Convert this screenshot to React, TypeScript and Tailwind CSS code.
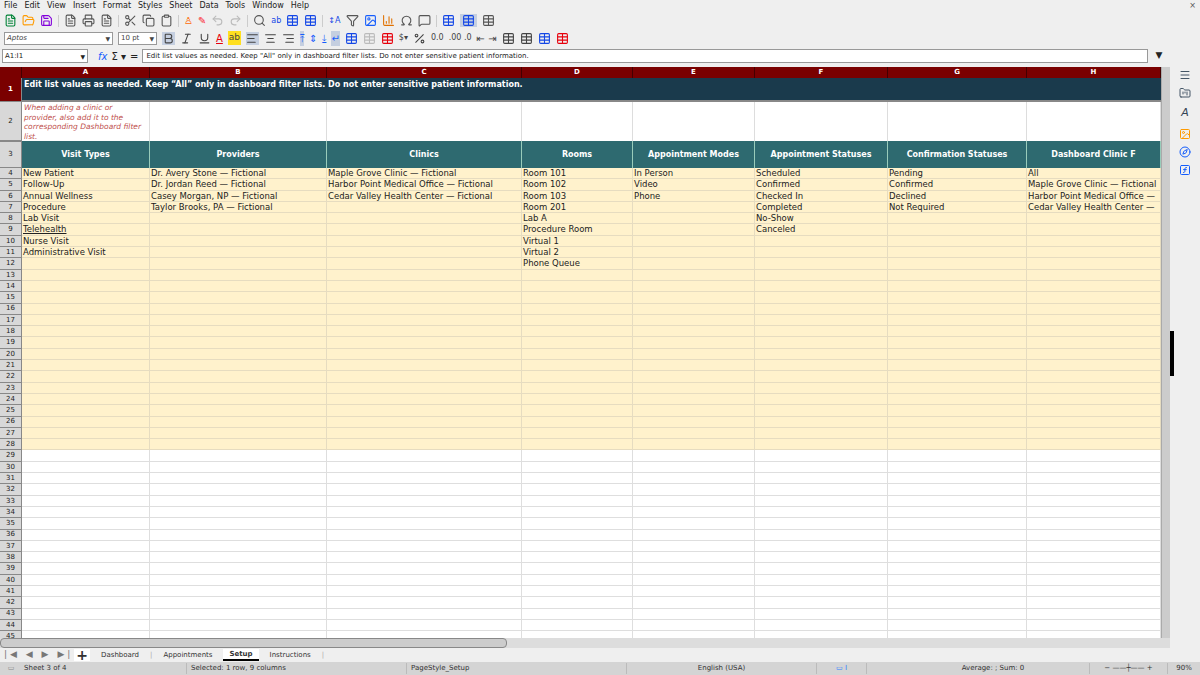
import { FileText, FolderOpen, Save, Printer, Scissors, Copy, Clipboard, Undo2, Redo2, Search, Table, Filter, Image, BarChart3, Omega, MessageSquare, AlignLeft, AlignCenter, AlignRight, Bold, Italic, Underline, Percent, Menu, Compass, FolderKanban, SquareFunction } from 'lucide-react'

const cols = [
  { l: 'A', w: 128, h: 'Visit Types' },
  { l: 'B', w: 177, h: 'Providers' },
  { l: 'C', w: 195, h: 'Clinics' },
  { l: 'D', w: 111, h: 'Rooms' },
  { l: 'E', w: 122, h: 'Appointment Modes' },
  { l: 'F', w: 133, h: 'Appointment Statuses' },
  { l: 'G', w: 139, h: 'Confirmation Statuses' },
  { l: 'H', w: 134, h: 'Dashboard Clinic F' },
]

const data: string[][] = [
  ['New Patient', 'Dr. Avery Stone — Fictional', 'Maple Grove Clinic — Fictional', 'Room 101', 'In Person', 'Scheduled', 'Pending', 'All'],
  ['Follow-Up', 'Dr. Jordan Reed — Fictional', 'Harbor Point Medical Office — Fictional', 'Room 102', 'Video', 'Confirmed', 'Confirmed', 'Maple Grove Clinic — Fictional'],
  ['Annual Wellness', 'Casey Morgan, NP — Fictional', 'Cedar Valley Health Center — Fictional', 'Room 103', 'Phone', 'Checked In', 'Declined', 'Harbor Point Medical Office —'],
  ['Procedure', 'Taylor Brooks, PA — Fictional', '', 'Room 201', '', 'Completed', 'Not Required', 'Cedar Valley Health Center —'],
  ['Lab Visit', '', '', 'Lab A', '', 'No-Show', '', ''],
  ['Telehealth', '', '', 'Procedure Room', '', 'Canceled', '', ''],
  ['Nurse Visit', '', '', 'Virtual 1', '', '', '', ''],
  ['Administrative Visit', '', '', 'Virtual 2', '', '', '', ''],
  ['', '', '', 'Phone Queue', '', '', '', ''],
]

const rows = Array.from({ length: 42 }, (_, i) => i + 4)

function RowHead({ n, className }: { n: number; className: string }) {
  return (
    <div className={`w-[22px] shrink-0 flex items-center justify-center text-[7px] border-b border-r border-[#888] ${className}`}>
      {n}
    </div>
  )
}

const ic = 'w-[13px] h-[13px]'

export default function App() {
  return (
    <div className="w-[1200px] h-[675px] overflow-hidden bg-[#efefef] flex flex-col text-[#222]" style={{ fontFamily: '"DejaVu Sans", sans-serif' }}>
      {/* menu */}
      <div className="h-[12px] flex items-center gap-[7px] px-[4px] text-[8px]">
        {['File', 'Edit', 'View', 'Insert', 'Format', 'Styles', 'Sheet', 'Data', 'Tools', 'Window', 'Help'].map((m) => (
          <span key={m}>{m}</span>
        ))}
        <span className="ml-auto text-[8px] text-[#555]">×</span>
      </div>
      {/* toolbar 1 */}
      <div className="h-[17px] flex items-center gap-[5px] px-[4px] text-[#555]">
        <FileText className={`${ic} text-green-700`} />
        <FolderOpen className={`${ic} text-amber-500`} />
        <Save className={`${ic} text-purple-700`} />
        <span className="w-px h-3 bg-[#ccc]" />
        <FileText className={ic} />
        <Printer className={ic} />
        <FileText className={ic} />
        <span className="w-px h-3 bg-[#ccc]" />
        <Scissors className={ic} />
        <Copy className={ic} />
        <Clipboard className={ic} />
        <span className="w-px h-3 bg-[#ccc]" />
        <span className="text-orange-500 text-[10px]">♙</span>
        <span className="text-red-500 text-[10px]">✎</span>
        <Undo2 className={`${ic} text-[#bbb]`} />
        <Redo2 className={`${ic} text-[#bbb]`} />
        <span className="w-px h-3 bg-[#ccc]" />
        <Search className={ic} />
        <span className="text-[8px] text-blue-700">ab</span>
        <Table className={`${ic} text-blue-700`} />
        <Table className={`${ic} text-blue-700`} />
        <span className="w-px h-3 bg-[#ccc]" />
        <span className="text-[8px] text-blue-700">↕A</span>
        <Filter className={ic} />
        <Image className={`${ic} text-blue-600`} />
        <BarChart3 className={`${ic} text-amber-600`} />
        <Omega className={ic} />
        <MessageSquare className={ic} />
        <span className="w-px h-3 bg-[#ccc]" />
        <Table className={`${ic} text-blue-700`} />
        <span className="bg-[#c5cfe0] px-[2px]"><Table className={`${ic} text-blue-700`} /></span>
        <Table className={ic} />
      </div>
      {/* toolbar 2 */}
      <div className="h-[18px] flex items-center gap-[5px] px-[4px] text-[#444]">
        <div className="w-[109px] h-[13px] bg-white border border-[#999] text-[7px] italic flex items-center px-[2px] justify-between">Aptos<span className="text-[6px]">▼</span></div>
        <div className="w-[39px] h-[13px] bg-white border border-[#999] text-[7px] flex items-center px-[2px] justify-between">10 pt<span className="text-[6px]">▼</span></div>
        <span className="bg-[#c5cfe0]"><Bold className={ic} /></span>
        <Italic className={ic} />
        <Underline className={ic} />
        <span className="text-[10px] text-red-600 underline">A</span>
        <span className="text-[9px] bg-yellow-300 px-px">ab</span>
        <span className="bg-[#c5cfe0]"><AlignLeft className={ic} /></span>
        <AlignCenter className={ic} />
        <AlignRight className={ic} />
        <span className="text-[10px] text-blue-600 bg-[#c5cfe0]">⤒</span>
        <span className="text-[10px] text-blue-600">⇕</span>
        <span className="text-[10px] text-blue-600">⤓</span>
        <span className="bg-[#c5cfe0] text-[10px] text-blue-600">↵</span>
        <Table className={`${ic} text-blue-700`} />
        <Table className={`${ic} text-[#bbb]`} />
        <Table className={`${ic} text-red-600`} />
        <span className="text-[8px]">$▾</span>
        <Percent className={ic} />
        <span className="text-[8px]">0.0</span>
        <span className="text-[8px]">.00 .0</span>
        <span className="text-[10px]">⇤ ⇥</span>
        <Table className={ic} />
        <Table className={ic} />
        <Table className={`${ic} text-blue-700`} />
        <Table className={`${ic} text-red-600`} />
      </div>
      {/* formula bar */}
      <div className="h-[18px] flex items-center gap-[4px] px-[2px]">
        <div className="w-[86px] h-[14px] bg-white border border-[#999] text-[7px] flex items-center px-[2px] justify-between">A1:I1<span className="text-[6px]">▼</span></div>
        <span className="text-[10px] italic text-blue-600 ml-[6px]">fx</span>
        <span className="text-[10px]">Σ ▾</span>
        <span className="text-[10px]">=</span>
        <div className="flex-1 h-[14px] bg-white border border-[#999] text-[7px] flex items-center px-[3px]">
          Edit list values as needed. Keep "All" only in dashboard filter lists. Do not enter sensitive patient information.
        </div>
        <span className="w-[14px] text-[9px] text-center">▼</span>
        <span className="w-[28px]" />
      </div>
      <div className="flex-1 flex min-h-0 pt-[2px]">
        <div className="w-[1170px] flex flex-col">
          {/* grid */}
          <div className="flex-1 flex overflow-hidden">
            <div className="w-[1161px] flex flex-col">
              <div className="h-[11px] shrink-0 flex bg-[#7a0000] text-white text-[7px] font-bold">
                <div className="w-[22px] shrink-0 border-r border-[#400]" />
                {cols.map((c) => (
                  <div key={c.l} style={{ width: c.w }} className="shrink-0 text-center border-r border-[#400]">{c.l}</div>
                ))}
              </div>
              <div className="h-[24px] shrink-0 flex">
                <RowHead n={1} className="bg-[#7a0000] text-white font-bold" />
                <div className="flex-1 bg-[#1a3a4c] text-white text-[8px] font-bold px-[2px] pt-[1px] border-b-2 border-[#888]">
                  Edit list values as needed. Keep “All” only in dashboard filter lists. Do not enter sensitive patient information.
                </div>
              </div>
              <div className="h-[39px] shrink-0 flex">
                <RowHead n={2} className="bg-[#d8d8d8]" />
                {cols.map((c, i) => (
                  <div key={c.l} style={{ width: c.w }} className="shrink-0 bg-white border-r border-[#ddd] overflow-hidden text-[7.5px] italic text-[#c0504d] leading-[9.5px] px-[2px] pt-[1px]">
                    {i === 0 ? 'When adding a clinic or provider, also add it to the corresponding Dashboard filter list.' : ''}
                  </div>
                ))}
              </div>
              <div className="h-[27px] shrink-0 flex">
                <RowHead n={3} className="bg-[#d8d8d8] border-t border-[#555]" />
                {cols.map((c) => (
                  <div key={c.l} style={{ width: c.w }} className="shrink-0 bg-[#2e6a70] border-r border-[#9cb] text-white text-[8px] font-bold flex items-center justify-center whitespace-nowrap overflow-hidden">
                    {c.h}
                  </div>
                ))}
              </div>
              {rows.map((r) => {
                const d = data[r - 4]
                const yellow = r <= 28
                return (
                  <div key={r} className="h-[11.3px] flex shrink-0">
                    <RowHead n={r} className="bg-[#d8d8d8]" />
                    {cols.map((c, i) => (
                      <div
                        key={c.l}
                        style={{ width: c.w }}
                        className={`shrink-0 border-r border-b text-[8.5px] leading-[10px] px-[1px] whitespace-nowrap overflow-hidden ${yellow ? 'bg-[#fff2cc] border-[#e6dcc0]' : 'bg-white border-[#dedede]'} ${d && d[i] === 'Telehealth' ? 'underline' : ''}`}
                      >
                        {d ? d[i] : ''}
                      </div>
                    ))}
                  </div>
                )
              })}
            </div>
            <div className="w-[9px] bg-[#ccc] border-l border-[#aaa]" />
          </div>
          <div className="h-[10px] flex bg-[#ddd]">
            <div className="w-[507px] bg-[#ccc] border border-[#888] rounded-sm" />
          </div>
          <div className="h-[14px] flex items-center text-[7px] text-[#333] gap-[1px] px-[4px]">
            <span className="text-[9px] text-[#777] tracking-[3px]">|◀ ◀ ▶ ▶|</span>
            <span className="text-[14px] font-bold bg-white px-[2px] leading-[12px]">+</span>
            <span className="px-[10px]">Dashboard</span>
            <span className="text-[#aaa]">|</span>
            <span className="px-[10px]">Appointments</span>
            <span className="px-[6px] bg-white font-bold border-b-2 border-black">Setup</span>
            <span className="px-[10px]">Instructions</span>
            <span className="text-[#aaa]">|</span>
          </div>
        </div>
        <div className="flex-1 flex flex-col items-center gap-[6px] pt-[2px] text-[#456] relative">
          <Menu className="w-[12px] h-[12px]" />
          <FolderKanban className="w-[12px] h-[12px]" />
          <span className="text-[11px] italic text-[#345]">A</span>
          <Image className="w-[12px] h-[12px] text-amber-500" />
          <Compass className="w-[12px] h-[12px] text-blue-600" />
          <SquareFunction className="w-[12px] h-[12px] text-blue-600" />
          <div className="absolute left-0 top-[264px] w-[4px] h-[45px] bg-black" />
        </div>
      </div>
      {/* status */}
      <div className="h-[13px] bg-[#d4d4d4] flex items-center text-[7px] text-[#333]">
        <span className="w-[22px] text-center text-[#888]">▭</span>
        <span className="w-[165px] pl-[2px] border-r border-[#bbb]">Sheet 3 of 4</span>
        <span className="w-[220px] pl-[4px] border-r border-[#bbb]">Selected: 1 row, 9 columns</span>
        <span className="w-[220px] pl-[4px] border-r border-[#bbb]">PageStyle_Setup</span>
        <span className="w-[190px] text-center border-r border-[#bbb]">English (USA)</span>
        <span className="w-[50px] text-center border-r border-[#bbb] text-blue-500">▭ I</span>
        <span className="w-[30px] border-r border-[#bbb]" />
        <span className="w-[193px] text-center border-r border-[#bbb]">Average: ; Sum: 0</span>
        <span className="w-[78px] text-center border-r border-[#bbb]">− ——┼—— +</span>
        <span className="flex-1 text-center">90%</span>
      </div>
    </div>
  )
}
